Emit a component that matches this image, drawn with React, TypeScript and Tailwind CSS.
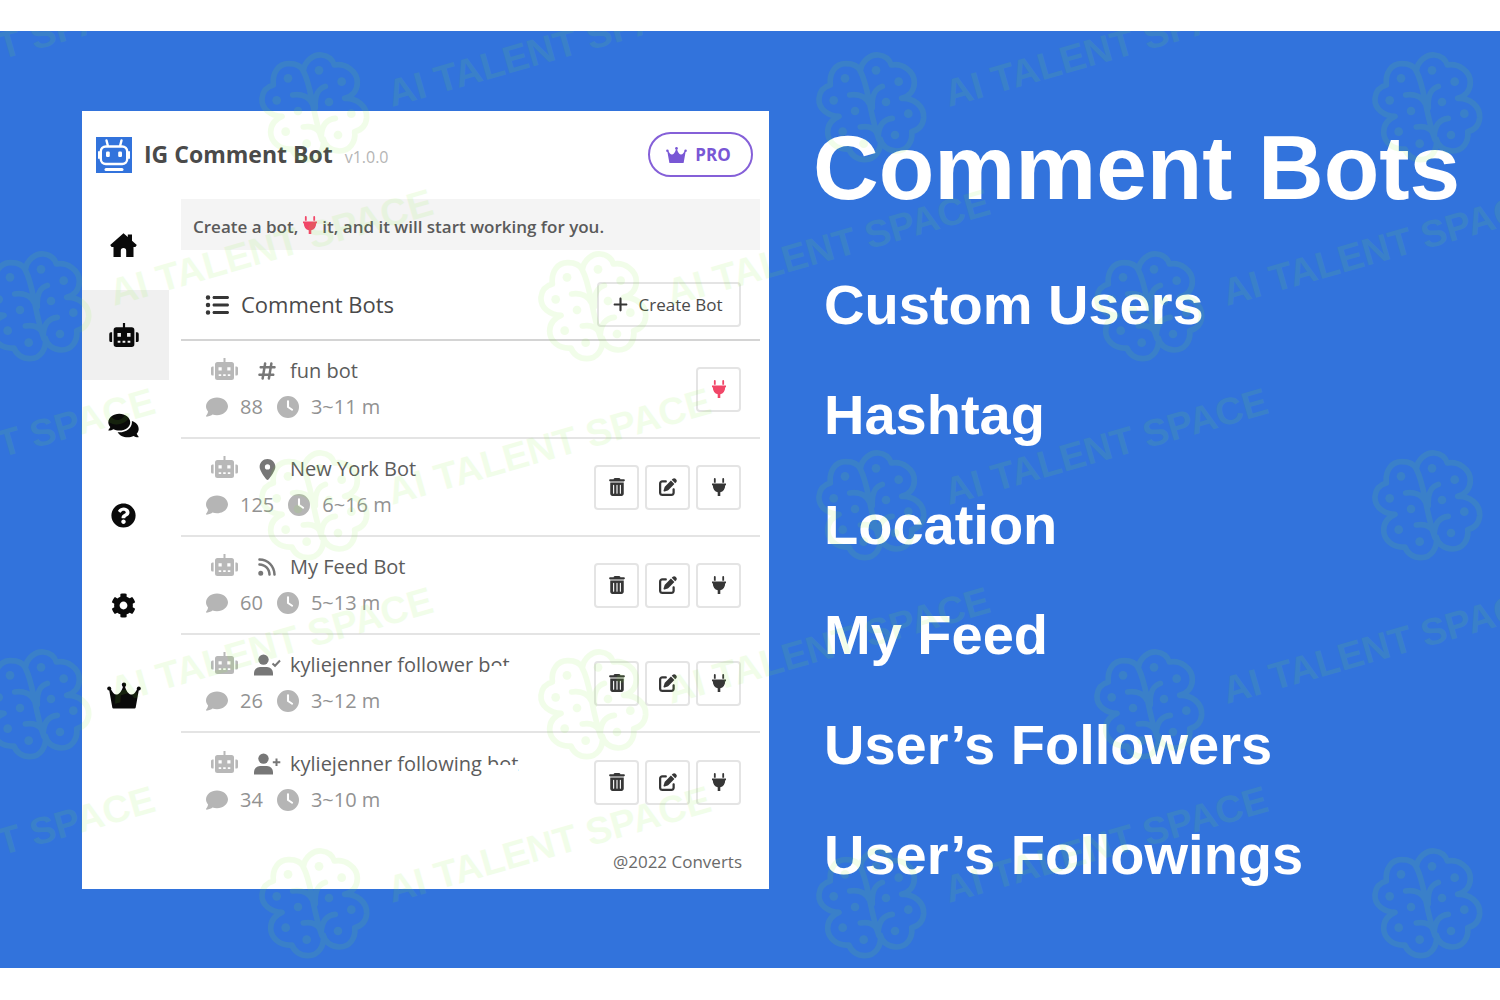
import type { ReactNode } from "react";
import { FaCog, FaComments, FaQuestionCircle } from "react-icons/fa";
import { FaClock, FaComment, FaHashtag, FaListUl, FaLocationDot, FaPenToSquare, FaPlus, FaRss, FaTrashCan } from "react-icons/fa6";

type Bot = {
  name: string;
  tail?: string;
  icon: ReactNode;
  comments: number;
  interval: string;
  active?: boolean;
};

type IconProps = { className?: string };

function HomeIcon({ className }: IconProps) {
  return (
    <svg viewBox="0 0 27 24" className={className} fill="currentColor" aria-hidden="true">
      <path d="M13.500.3l4.300 3.700V1.500h4.200v6.300l4.800 4.300-1.400 1.900h-1.900V24h-7.300v-6.200a2.700 2.700 0 0 0-5.400 0V24H3.500V14H1.600L.2 12.100z" />
    </svg>
  );
}

function RobotIcon({ className }: IconProps) {
  return (
    <svg viewBox="0 0 27 22" className={className} fill="currentColor" aria-hidden="true">
      <path
        fillRule="evenodd"
        d="M12.500 0h2v4H20.500a2.500 2.500 0 0 1 2.500 2.500v13a2.500 2.500 0 0 1-2.500 2.500h-14a2.500 2.500 0 0 1-2.500-2.500v-13A2.500 2.500 0 0 1 6.500 4h6zM7.500 9.200v3.400h3.200V9.200zM16.300 9.200v3.400h3.200V9.200zM7.700 16.300v1.700h2.500v-1.700zM12.200 16.300v1.700h2.500v-1.700zM16.800 16.300v1.700h2.500v-1.700z"
      />
      <path d="M2.600 8.500v9H1.500A1.500 1.500 0 0 1 0 16v-6a1.500 1.500 0 0 1 1.500-1.500zM24.400 8.500v9h1.100A1.500 1.500 0 0 0 27 16v-6a1.500 1.500 0 0 0-1.500-1.500z" />
    </svg>
  );
}

function PlugIcon({ className }: IconProps) {
  return (
    <svg viewBox="0 0 14 18" className={className} fill="currentColor" aria-hidden="true">
      <path d="M2.800 0a.9.9 0 0 1 .9.9V4.700H1.900V.9A.9.9 0 0 1 2.800 0zM11.200 0a.9.9 0 0 1 .9.9V4.700h-1.800V.9a.9.9 0 0 1 .9-.9zM0 5.500h14v1.700h-.8c0 3.800-2 6.300-4.900 7V18H5.700v-3.800c-2.900-.7-4.900-3.200-4.900-7H0z" />
    </svg>
  );
}

function CrownIcon({ className }: IconProps) {
  return (
    <svg viewBox="0 0 34 26" className={className} fill="currentColor" aria-hidden="true">
      <circle cx="2.200" cy="6" r="2" />
      <circle cx="17" cy="2.300" r="2.200" />
      <circle cx="31.800" cy="6" r="2" />
      <path d="M2 6.500l1.500-.8c2 4.800 4 6.600 6.500 6.300 3-.5 4.800-4 6.200-8.500h1.600c1.400 4.500 3.200 8 6.200 8.500 2.500.3 4.500-1.500 6.500-6.300l1.500.8-3.300 18.500a1.200 1.200 0 0 1-1.200 1h-21a1.200 1.200 0 0 1-1.200-1z" />
    </svg>
  );
}

function UserMark({ mark }: { mark: string }) {
  return (
    <svg viewBox="0 0 28 22" className="h-[22px] w-7" aria-hidden="true">
      <circle cx="10.500" cy="5.600" r="5.200" fill="currentColor" />
      <path d="M1 21.500v-2.600a6 6 0 0 1 6-6h7a6 6 0 0 1 6 6v2.600z" fill="currentColor" />
      <path d={mark} fill="none" stroke="currentColor" strokeWidth="2" />
    </svg>
  );
}

const bots: Bot[] = [
  { name: "fun bot", icon: <FaHashtag className="size-5" />, comments: 88, interval: "3~11 m", active: true },
  { name: "New York Bot", icon: <FaLocationDot className="size-[21px]" />, comments: 125, interval: "6~16 m" },
  { name: "My Feed Bot", icon: <FaRss className="size-5" />, comments: 60, interval: "5~13 m" },
  { name: "kyliejenner follower b", tail: "ot", icon: <UserMark mark="M19.500 9.500l2.500 2.300 5-5.300" />, comments: 26, interval: "3~12 m" },
  { name: "kyliejenner following ", tail: "bot", icon: <UserMark mark="M23.500 5.500v7.500M19.800 9.200h7.500" />, comments: 34, interval: "3~10 m" },
];

const navItems = [
  { label: "Home", icon: <HomeIcon className="h-6 w-[27px]" /> },
  { label: "Bots", icon: <RobotIcon className="h-6 w-[30px]" />, active: true },
  { label: "Comments", icon: <FaComments className="h-[27px] w-[31px]" /> },
  { label: "Help", icon: <FaQuestionCircle className="size-[25px]" /> },
  { label: "Settings", icon: <FaCog className="size-[25px]" /> },
  { label: "Upgrade", icon: <CrownIcon className="h-[27px] w-[34px]" /> },
];

const features = ["Custom Users", "Hashtag", "Location", "My Feed", "User’s Followers", "User’s Followings"];

const watermarks = [
  [-242, 76], [314, 76], [871, 76], [1427, 76],
  [36, 275], [593, 275], [1149, 275],
  [-242, 474], [314, 474], [871, 474], [1427, 474],
  [36, 673], [593, 673], [1149, 673],
  [-242, 872], [314, 872], [871, 872], [1427, 872],
];

const brainDots = [
  [-78, -86], [15, -110], [83, -76], [-112, -20], [45, -15],
  [-48, 12], [112, 20], [-85, 74], [72, 84], [-22, 110],
];

function Brain() {
  return (
    <g transform="scale(0.3333)">
      <path
        fill="none"
        stroke="currentColor"
        strokeWidth="17"
        strokeLinecap="round"
        strokeLinejoin="round"
        d="M-32-108C-28-140 0-158 22-156C42-154 56-142 61-126C94-132 130-108 130-74C130-50 116-32 92-26C128-28 160-2 158 32C156 56 144 68 122 74C126 104 108 132 76 132C52 132 32 116 28 96C32 130 12 158-18 158C-42 158-60 144-66 126C-102 130-130 104-130 76C-130 54-120 38-96 28C-130 26-158 6-156-26C-154-46-144-60-122-66C-126-104-106-130-76-130C-52-130-38-122-32-108C-22-90-14-60-6-20C2 20 10 62 24 98M-64-36C-36-40-14-30-4-8M4 2C2-34 10-54 34-62M-32 60C-10 56 8 62 18 78M22 84C24 54 40 36 64 34"
      />
      {brainDots.map(([cx, cy]) => (
        <circle key={`${cx}/${cy}`} cx={cx} cy={cy} r="13" fill="currentColor" />
      ))}
    </g>
  );
}

function Watermarks() {
  return (
    <svg aria-hidden="true" className="pointer-events-none absolute inset-0 h-full w-full text-[#82f030] opacity-10">
      {watermarks.map(([x, y]) => (
        <g key={`${x}/${y}`} transform={`translate(${x} ${y})`}>
          <Brain />
          <text
            transform="translate(78 0) rotate(-16)"
            fill="currentColor"
            className="font-['Liberation_Sans_Narrow','Liberation_Sans',sans-serif] text-[38px] font-bold"
          >
            AI TALENT SPACE
          </text>
        </g>
      ))}
    </svg>
  );
}

function Logo() {
  return (
    <svg viewBox="0 0 36 36" className="size-9 shrink-0" role="img" aria-label="IG Comment Bot logo">
      <rect width="36" height="36" fill="#3273dc" />
      <g fill="none" stroke="#fff" strokeWidth="2.400" strokeLinecap="round">
        <path d="M10.500 3.500l1.300 5M25.500 3.500l-1.300 5" />
        <rect x="4.800" y="9.500" width="26.400" height="17.500" rx="5" />
        <path d="M3 15v6M33 15v6" strokeWidth="2" />
        <path d="M10 32.500h16" strokeWidth="3" />
      </g>
      <rect x="10" y="14.500" width="3.800" height="5.500" rx="1.200" fill="#fff" />
      <rect x="22.200" y="14.500" width="3.800" height="5.500" rx="1.200" fill="#fff" />
    </svg>
  );
}

function IconButton({ label, danger, children }: { label: string; danger?: boolean; children: ReactNode }) {
  return (
    <button
      type="button"
      aria-label={label}
      className={`flex size-[45px] items-center justify-center rounded-[4px] border-2 border-[#e4e4e4] ${danger ? "text-[#f14668]" : "text-[#363636]"}`}
    >
      {children}
    </button>
  );
}

function BotRow({ bot }: { bot: Bot }) {
  return (
    <li className="flex h-[98px] items-center justify-between border-b-2 border-[#e4e4e4] pr-[19px] pl-[25px] last:border-b-0">
      <div className="text-[20px] leading-9">
        <div className="flex items-center text-[#5c5c5c]">
          <RobotIcon className="mb-1 ml-[5px] h-[22px] w-[27px] text-[#b8b8b8]" />
          <span className="mr-2 ml-[14px] flex w-[30px] justify-center text-[#777]">{bot.icon}</span>
          <span className="whitespace-pre">
            {bot.name}
            {bot.tail && (
              <span className="relative">
                {bot.tail}
                <span className="absolute inset-x-0 bottom-0 h-3 bg-white" />
              </span>
            )}
          </span>
        </div>
        <div className="flex items-center text-[#929292]">
          <FaComment className="size-[22px] text-[#b5b5b5]" />
          <span className="mr-[14px] ml-3">{bot.comments}</span>
          <FaClock className="size-[22px] text-[#b5b5b5]" />
          <span className="ml-3">{bot.interval}</span>
        </div>
      </div>
      <div className="flex gap-[6px]">
        {!bot.active && (
          <>
            <IconButton label={`Delete ${bot.name}`}>
              <FaTrashCan className="size-[18px]" />
            </IconButton>
            <IconButton label={`Edit ${bot.name}`}>
              <FaPenToSquare className="size-[18px]" />
            </IconButton>
          </>
        )}
        <IconButton label={`Toggle ${bot.name}`} danger={bot.active}>
          <PlugIcon className="h-[18px] w-[14px]" />
        </IconButton>
      </div>
    </li>
  );
}

export default function App() {
  return (
    <div className="flex min-h-screen flex-col bg-white pt-[31px] pb-8 font-['Open_Sans',sans-serif]">
      <div className="relative grid grow grid-cols-2 gap-11 overflow-hidden bg-[#3273dc] pt-20 pb-[79px] pl-[82px]">
        <section className="flex flex-col bg-white">
          <header className="flex items-center justify-between pt-[21px] pr-4 pb-[22px] pl-[14px]">
            <div className="flex items-center gap-3">
              <Logo />
              <h2 className="text-[23px] font-bold text-[#4a4a4a]">IG Comment Bot</h2>
              <span className="pt-1 text-base text-[#b5b5b5]">v1.0.0</span>
            </div>
            <button
              type="button"
              className="flex h-[45px] w-[105px] items-center justify-center gap-2 rounded-full border-2 border-[#8560d8] pr-1 text-[17px] font-bold text-[#7957d5]"
            >
              <CrownIcon className="h-4 w-[21px]" />
              PRO
            </button>
          </header>

          <div className="flex grow gap-3">
            <nav className="w-[87px] shrink-0 pt-px">
              {navItems.map((item) => (
                <a
                  key={item.label}
                  href={`#${item.label.toLowerCase()}`}
                  aria-label={item.label}
                  className={`flex h-[90px] items-center justify-center pr-1 text-[#0a0a0a] ${item.active ? "bg-[#f0f0f0]" : ""}`}
                >
                  {item.icon}
                </a>
              ))}
            </nav>

            <main className="mr-[9px] grow">
              <p className="flex h-[51px] items-center bg-[#f4f4f4] px-3 pt-1 text-[17px] font-semibold text-[#5a5a5a]">
                Create a bot,
                <PlugIcon className="mx-[5px] mb-[3px] h-[18px] w-[14px] text-[#f14668]" />
                it, and it will start working for you.
              </p>

              <div className="mt-8 flex items-center justify-between border-b-2 border-[#d4d4d4] pr-[19px] pb-3 pl-6">
                <h3 className="flex items-center gap-3 text-[22px] text-[#4a4a4a]">
                  <FaListUl className="size-6 text-[#363636]" />
                  Comment Bots
                </h3>
                <button
                  type="button"
                  className="flex h-[45px] w-[144px] items-center justify-center gap-[10px] rounded-[4px] border-2 border-[#e4e4e4] pr-1 text-[17px] text-[#4a4a4a]"
                >
                  <FaPlus className="size-[17px] text-[#363636]" />
                  Create Bot
                </button>
              </div>

              <ul>
                {bots.map((bot) => (
                  <BotRow key={bot.name} bot={bot} />
                ))}
              </ul>

              <footer className="pt-[19px] pr-[18px] text-right text-[17px] leading-6 text-[#6a6a6a]">@2022 Converts</footer>
            </main>
          </div>
        </section>

        <section className="pt-[3px] font-['Liberation_Sans',sans-serif] font-bold whitespace-nowrap text-white">
          <h1 className="text-[91px] leading-[108px]">Comment Bots</h1>
          <ul className="mt-[51px] flex flex-col gap-[46px] pl-[11px] text-[56px] leading-[64px]">
            {features.map((feature) => (
              <li key={feature}>{feature}</li>
            ))}
          </ul>
        </section>

        <Watermarks />
      </div>
    </div>
  );
}
